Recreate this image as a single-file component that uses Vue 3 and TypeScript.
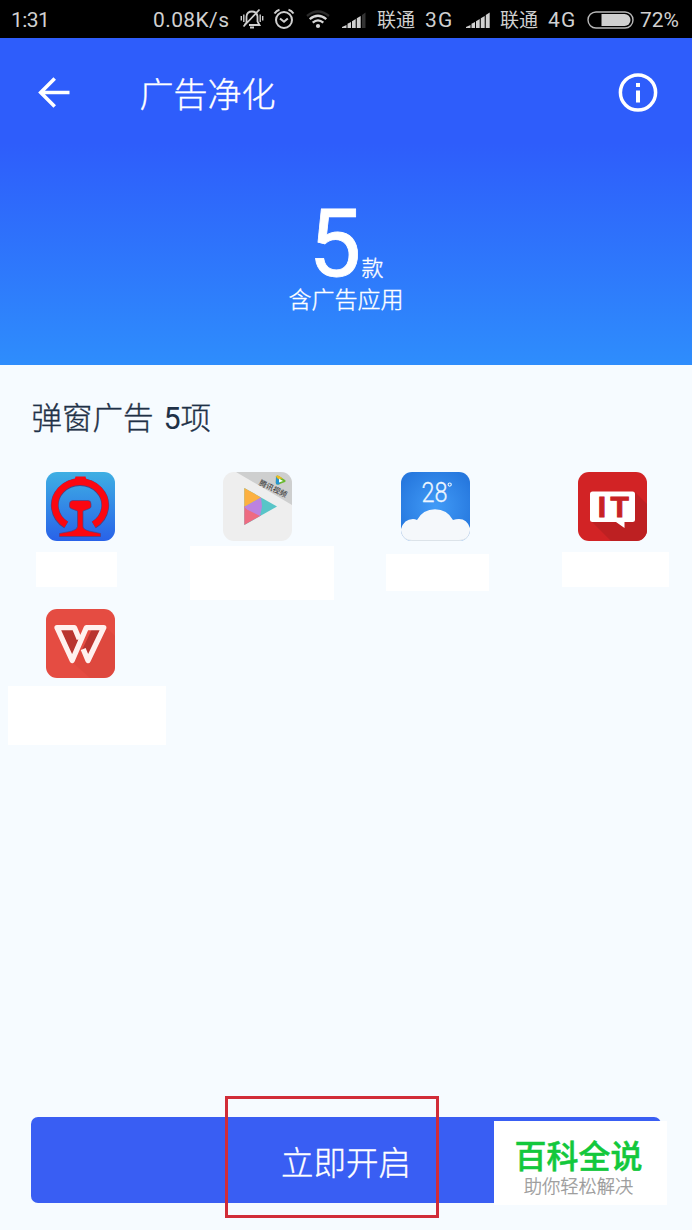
<script setup lang="ts">
interface AppItem {
  id: string
  labelWidth: number
  labelHeight: number
  labelGap: number
  labelShift: number
}

const apps: AppItem[] = [
  { id: 'railway', labelWidth: 81, labelHeight: 35, labelGap: 11, labelShift: -8 },
  { id: 'video', labelWidth: 144, labelHeight: 54, labelGap: 5, labelShift: 8 },
  { id: 'weather', labelWidth: 103, labelHeight: 37, labelGap: 13, labelShift: 4 },
  { id: 'it', labelWidth: 107, labelHeight: 35, labelGap: 11, labelShift: 6 },
  { id: 'wps', labelWidth: 158, labelHeight: 59, labelGap: 8, labelShift: 13 },
]
const adCount: number = apps.length
</script>

<template>
  <div class="page">
    <div class="status">
      <span class="clock">1:31</span>
      <span class="speed">0.08K/s</span>
      <svg class="bell" width="24" height="22" viewBox="0 0 24 22" fill="none" stroke="#cfcfcf" stroke-width="1.8">
        <path d="M6.5 14.5V8.5Q7 3.5 12 3.5Q17 3.5 17.5 8.5V13.5L19.5 17H9M4.5 17L6.5 14.5M3.5 18.5L19.5 1.5" />
        <path d="M3.8 6.5V14M1.3 8V12.5M20.2 6.5V14M22.7 8V12.5" stroke-width="1.4" />
        <path d="M10 19.5H14" stroke-width="2" />
      </svg>
      <svg class="alarm" width="22" height="22" viewBox="0 0 22 22" fill="none" stroke="#cfcfcf" stroke-width="2">
        <circle cx="11" cy="12" r="8" />
        <path d="M7 10.5L11 13.8L14.8 10.5M1.5 5.5Q3.5 2.5 6.5 1.7M20.5 5.5Q18.5 2.5 15.5 1.7" />
      </svg>
      <svg class="wifi" width="24" height="20" viewBox="0 0 24 20" fill="none" stroke-width="2.3">
        <path d="M1 6Q12 -3 23 6" stroke="#2b2b2b" />
        <path d="M3.7 9.2Q12 2.3 20.3 9.2M6.7 12.7Q12 8 17.3 12.7" stroke="#d6d6d6" />
        <circle cx="12" cy="16" r="2.1" fill="#d6d6d6" />
      </svg>
      <svg class="signal first" width="25" height="17" viewBox="0 0 25 17" fill="#d0d0d0">
        <path d="M0 16V15L4.5 13V16ZM5.5 16V11.7L9 10V16ZM10 16V9.3L13.7 7V16ZM14.8 16V6.2L18.7 4V16Z" />
        <path d="M20 16V3L23.5 .5V16Z" fill="#333" />
      </svg>
      <span class="carrier one">联通</span><span class="net one">3G</span>
      <svg class="signal" width="25" height="17" viewBox="0 0 25 17" fill="#d0d0d0">
        <path d="M0 16V15L4.5 13V16ZM5.5 16V11.7L9 10V16ZM10 16V9.3L13.7 7V16ZM14.8 16V6.2L18.7 4V16ZM19.8 16V3L23.7 .5V16Z" />
      </svg>
      <span class="carrier two">联通</span><span class="net two">4G</span>
      <svg class="battery" width="47" height="18" viewBox="0 0 47 18">
        <rect x="1" y="1" width="45" height="16" rx="8" fill="none" stroke="#b8b8b8" stroke-width="1.4" />
        <path d="M14.5 3H37.5A6 6 0 0 1 37.5 15H14.5Z" fill="#d0d0d0" />
      </svg>
      <span class="percent">72%</span>
    </div>

    <header class="hero">
      <div class="bar">
        <svg class="back" width="34" height="34" viewBox="0 0 34 34" fill="none" stroke="#fff" stroke-width="3.6">
          <path d="M32.5 16.5H4M17.7 2.5L3.7 16.5L17.7 30.5" />
        </svg>
        <h1>广告净化</h1>
        <svg class="info" width="40" height="40" viewBox="0 0 40 40">
          <circle cx="20" cy="19.5" r="17.6" fill="none" stroke="#fff" stroke-width="3.5" />
          <path d="M18 10H22V14H18ZM18 17.5H22V29.5H18Z" fill="#fff" />
        </svg>
      </div>
      <div class="count"><span class="number">{{ adCount }}</span><span class="unit">款</span></div>
      <div class="caption">含广告应用</div>
    </header>

    <main class="content">
      <h2>弹窗广告 <span class="num">{{ adCount }}</span>项</h2>
      <div class="grid">
        <div v-for="app in apps" :key="app.id" class="cell">
          <svg class="icon" width="69" height="69" viewBox="0 0 69 69">
            <defs>
              <linearGradient id="railBg" x1="0" y1="0" x2="0" y2="1">
                <stop offset="0" stop-color="#3eafe3" /><stop offset="1" stop-color="#2862e9" />
              </linearGradient>
              <radialGradient id="skyBg" cx=".5" cy=".5" r=".65">
                <stop offset="0" stop-color="#419bf7" /><stop offset="1" stop-color="#2475dc" />
              </radialGradient>
              <clipPath id="tile"><rect width="69" height="69" rx="11" /></clipPath>
            </defs>
            <g clip-path="url(#tile)">
              <template v-if="app.id === 'railway'">
                <rect width="69" height="69" fill="url(#railBg)" />
                <path d="M20.2 53A25.2 23.3 0 1 1 47.8 53" fill="none" stroke="#494484" stroke-width="7.8" />
                <path d="M20.2 52.6A25.2 23.3 0 1 1 47.8 52.6" fill="none" stroke="#fb0710" stroke-width="6.6" />
                <path d="M29.5 4.5H39.5L40.5 8V12H28.5V8Z" fill="#fb0710" />
                <path d="M27 28.5H42Q45 28.5 45 32V34.5Q45 36 43 36.7L37 39V54.5Q37 57.5 43.5 59.2L54.5 61.5V64.5H13.5V61.5L25.5 59.2Q31.5 57.5 31.5 54.5V39L25.5 36.7Q23.5 36 23.5 34.5V32Q23.5 28.5 27 28.5Z" fill="#fb0710" stroke="#494484" stroke-width=".7" />
              </template>
              <template v-else-if="app.id === 'video'">
                <rect width="69" height="69" fill="#eee" />
                <path d="M13 0H69V33Z" fill="#cecfcf" />
                <path d="M21.3 16L54 34.5L21.3 53Z" fill="#58c5c8" />
                <path d="M21.3 16L38 25.4L21.3 35Z" fill="#fcb040" />
                <path d="M21.3 34L38 43.5L21.3 53Z" fill="#ee6b81" />
                <path d="M21.3 35L38 25.4L39 34.5L37 44L24 37.5Z" fill="#bc82df" />
                <path d="M53 4.5Q54 3 56 4L62 8Q63.5 9 62 10L55.5 12.5Q53 13 52.8 11Z" fill="#69b92f" />
                <path d="M53 5L52.8 11Q53 13 55.5 12.5L57 12L55.5 7Z" fill="#2694d2" />
                <path d="M53 4.5Q54 3 56 4L60 6.6L55 7Z" fill="#efba24" />
                <path d="M56 6.5L60 9L56 10.5Z" fill="#fff" />
                <text x="35.5" y="12.5" transform="rotate(26 35.5 12.5)" class="video-tag">腾讯视频</text>
              </template>
              <template v-else-if="app.id === 'weather'">
                <rect width="69" height="69" fill="url(#skyBg)" />
                <text x="20.5" y="30" class="degree" textLength="26" lengthAdjust="spacingAndGlyphs">28</text>
                <circle cx="48.7" cy="12.6" r="1.6" fill="none" stroke="#e8f3ff" stroke-width="1.1" />
                <path d="M0 69V57Q3 47 12 47Q14 47 16 48Q22 37.3 34 37.3Q46 37.3 52 48Q55 47 58 47Q66 47 69 56V69Z" fill="#f5f8fb" />
                <path d="M0 60Q2 68.3 11 68.5H58Q67 68 69 60" fill="none" stroke="#dce3e9" stroke-width="1" />
              </template>
              <template v-else-if="app.id === 'it'">
                <rect width="69" height="69" fill="#d22325" />
                <path d="M13 49L33 69H69V32L57 20V49Z" fill="#bd2022" />
                <path d="M14.5 19.5H54.5Q57 19.5 57 22V47.5Q57 50 54.5 50H46.5V56L38 50H14.5Q12 50 12 47.5V22Q12 19.5 14.5 19.5Z" fill="#fff" />
                <text x="19.8 32.5" y="45.3" class="it-text">IT</text>
              </template>
              <template v-else>
                <rect width="69" height="69" fill="#e54c42" />
                <path d="M60 18L69 27V69H44L25 52Z" fill="#d9453c" opacity=".55" />
                <path d="M15 20H31L36 30L27 50ZM36 41L46 20H56L43 51Z" fill="#b9342f" />
                <path d="M33.2 30L28.5 18.7H11L26.2 51.5L40.3 18.7H57.8L42 51.5L37.2 40" fill="none" stroke="#fff1ef" stroke-width="5.3" stroke-linejoin="round" />
              </template>
            </g>
          </svg>
          <div class="label" :style="{ width: app.labelWidth + 'px', height: app.labelHeight + 'px', marginTop: app.labelGap + 'px', marginLeft: app.labelShift + 'px' }"></div>
        </div>
      </div>
    </main>

    <footer class="footer">
      <button class="enable">立即开启</button>
      <div class="highlight"></div>
      <div class="badge"><strong>百科全说</strong><span>助你轻松解决</span></div>
    </footer>
  </div>
</template>

<style>
html, body { margin: 0; background: #f6fbff; }
</style>

<style scoped>
* { box-sizing: border-box; }
.page { width: 692px; height: 1230px; display: flex; flex-direction: column; background: #f6fbff; font-family: Roboto, "Noto Sans CJK SC", sans-serif; overflow: hidden; }
.status { height: 38px; flex: none; display: flex; align-items: center; background: #000; color: #d0d0d0; font-size: 21px; line-height: 38px; padding-top: 2px; white-space: nowrap; }
.status svg { flex: none; display: block; }
.status span { flex: none; }
.clock { width: 142px; padding-left: 11px; letter-spacing: -.6px; }
.speed { width: 98px; padding-left: 11px; letter-spacing: .4px; }
.bell { margin-bottom: 3px; }
.alarm { margin-left: 9px; margin-bottom: 3px; }
.wifi { margin-left: 11px; }
.signal { margin-top: 1px; }
.signal.first { margin-left: 12px; }
.carrier { font-size: 19px; width: 58px; padding-left: 10px; padding-top: 1px; }
.carrier.two { padding-left: 9px; width: 57px; }
.net { letter-spacing: 1.2px; width: 41px; }
.net.two { width: 39px; }
.battery { margin-top: -1px; }
.percent { padding-left: 6px; font-size: 21px; letter-spacing: 0; }
.hero { height: 327px; flex: none; color: #fff; background: linear-gradient(#2e5dfb 0, #2e5dfb 105px, #2e8dfc 327px); text-align: center; }
h1, h2, .unit, .caption, .enable { -webkit-text-stroke: .35px currentColor; }
.bar { height: 109px; display: flex; align-items: center; padding: 0 34px 0 37px; }
.back { flex: none; }
h1 { flex: 1; margin: 0 0 0 68.5px; padding-top: 4px; font-size: 34px; font-weight: 300; line-height: 48px; text-align: left; }
.count { height: 134px; padding-top: 57px; display: flex; justify-content: center; align-items: baseline; }
.number { font-size: 94px; line-height: 80px; font-weight: 400; -webkit-text-stroke: .8px currentColor; }
.unit { font-size: 22px; line-height: 24px; font-weight: 300; }
.caption { font-size: 23px; line-height: 40px; font-weight: 300; }
.content { flex: 1; }
h2 { margin: 0; padding: 32px 0 0 31.5px; height: 107px; font-size: 30.5px; line-height: 43px; font-weight: 300; color: #1f3147; }
.num { font-weight: 400; margin-left: 2.5px; -webkit-text-stroke: 0; }
.grid { width: 710px; margin-left: -8px; display: grid; grid-template-columns: repeat(4, 177.3px); grid-auto-rows: 137px; }
.cell { display: flex; flex-direction: column; align-items: center; }
.icon { display: block; flex: none; }
.label { flex: none; background: #fff; }
.video-tag { font: 500 7.5px "Noto Sans CJK SC", sans-serif; fill: #444; }
.degree { font: 300 27px Roboto, sans-serif; fill: #eef6ff; stroke: #eef6ff; stroke-width: .3px; }
.it-text { font: 700 30px "Liberation Sans", sans-serif; fill: #c82224; stroke: #c82224; stroke-width: 1px; }
.footer { position: relative; flex: none; height: 113px; padding: 0 31px; }
.enable { display: block; width: 630px; height: 86px; border: 0; border-radius: 7px; padding: 0; background: #395ef3; color: #fff; font: 300 32.5px "Noto Sans CJK SC", sans-serif; }
.highlight { position: absolute; left: 225px; top: -21px; width: 214px; height: 122px; border: 3px solid #d12c38; }
.badge { position: absolute; left: 494px; top: 4px; width: 173px; height: 84px; background: #fff; display: flex; flex-direction: column; align-items: center; padding: 12px 4px 0 0; font-family: "Noto Sans CJK SC", sans-serif; }
.badge strong { font-size: 32px; line-height: 43px; color: #13c83c; font-weight: 500; -webkit-text-stroke: .5px currentColor; }
.badge span { font-size: 18.3px; line-height: 18px; color: #999; font-weight: 300; -webkit-text-stroke: .3px currentColor; }
</style>
